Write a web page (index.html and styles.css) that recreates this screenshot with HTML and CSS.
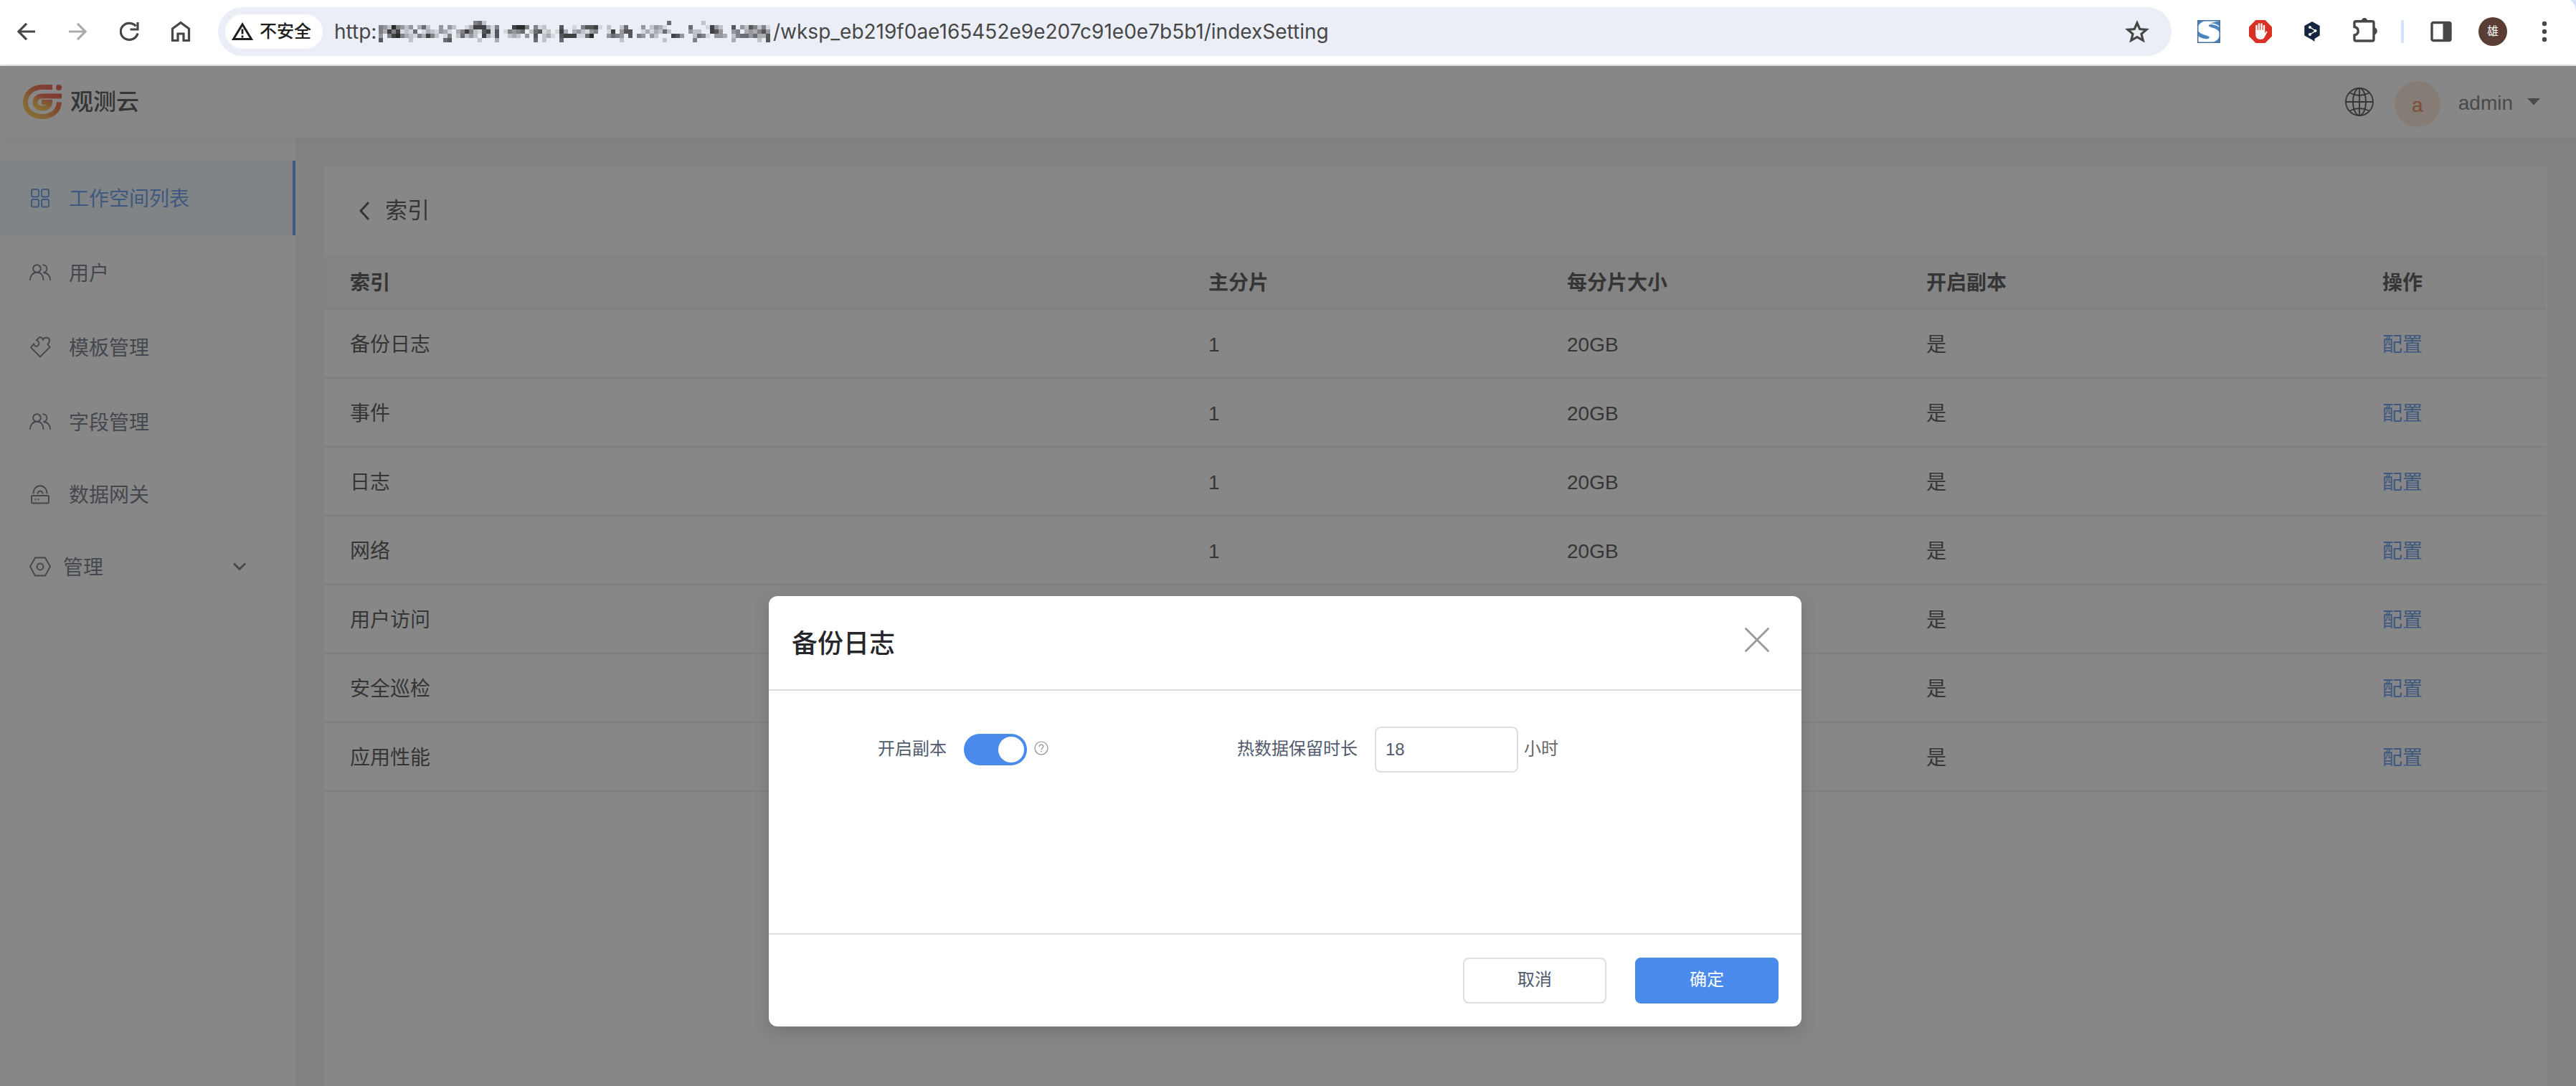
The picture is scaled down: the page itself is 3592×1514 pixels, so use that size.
FILE: index.html
```html
<!DOCTYPE html>
<html lang="zh-CN">
<head>
<meta charset="utf-8">
<title>观测云</title>
<link rel="stylesheet" href="styles.css">
</head>
<body>
<div class="browser">
  <svg class="nav-icon back" width="26" height="26" viewBox="0 0 26 26"><path d="M25 13H3M13 1.800L2 13l11 11.200"/></svg>
  <svg class="nav-icon forward" width="26" height="26" viewBox="0 0 26 26"><path d="M0 13h23M12 1.800L23 13 12 24.200"/></svg>
  <svg class="nav-icon reload" width="28" height="28" viewBox="0 0 28 28"><path d="M25 16.500A12 11.500 0 1 1 22.500 6.500M25 1v10H14.500"/></svg>
  <svg class="nav-icon home" width="28" height="30" viewBox="0 0 28 30"><path d="M2.500 27.500V11L14 2.500 25.500 11v16.500H18V18h-8v9.500z"/></svg>
  <div class="address">
    <div class="chip">
      <svg width="30" height="26" viewBox="0 0 30 26"><path d="M15 3L2.500 23.500h25z" fill="none" stroke="#1f1f1f" stroke-width="3"/><path d="M15 9.500v7M15 18.500v3" stroke="#1f1f1f" stroke-width="2.800"/></svg>
      <span>不安全</span>
    </div>
    <span class="url url-scheme">http:</span>
    <svg class="mosaic" id="mosaic" width="550" height="30" viewBox="0 0 550 30" shape-rendering="crispEdges"></svg>
    <span class="url url-path">/wksp_eb219f0ae165452e9e207c91e0e7b5b1/indexSetting</span>
    <svg class="star" width="34" height="32" viewBox="0 0 34 32"><path d="M17 4l3.700 8.500 9.300.8-7 6 2.200 9-8.200-4.800-8.200 4.800 2.200-9-7-6 9.300-.8z" fill="none" stroke="#474747" stroke-width="3.200"/></svg>
  </div>
  <svg class="ext ext-s" width="32" height="32" viewBox="0 0 32 32"><path d="M0 0h32v32H0z" fill="#fff"/><path d="M31 5v13c-1.500-4-5-6-10.500-7.500-4-1.200-5.500-2.300-4.500-3.500C18 5 25 6.500 31 10zM1 1h9C5 3 2 6 1 9zM1 15c2 3 5 4.500 10 6 4.500 1.300 6.500 2.300 5.500 4C15 27.500 7 26.500 1 22zM31 22v9h-9c5-2 8-5 9-9zM14 5.500C20 3.500 27 5 31 9V1" fill="#4d86bf"/><path d="M.75.75h30.500v30.500H.750z" fill="none" stroke="#43709f" stroke-width="1.500"/></svg>
  <svg class="ext ext-hand" width="32" height="32" viewBox="0 0 32 32"><path d="M9.400 0h13.200L32 9.400v13.200L22.600 32H9.400L0 22.600V9.400z" fill="#d93025"/><path d="M10.500 17V8M14 15V5.500M17.500 15V5.500M21 18V8" stroke="#fff" stroke-width="2.400" stroke-linecap="round"/><path d="M9.300 14h12.900v5l1.300-2.500c1-1.500 2.500-1 1.700.7L21.500 24c-1 2-2.500 3-5.500 3-4.500 0-6.700-3-6.700-7z" fill="#fff"/></svg>
  <svg class="ext ext-hex" width="24" height="30" viewBox="0 0 24 30"><path d="M12 1l10.700 6v13.500L15.500 25v4L12 26.500 1.300 20.500V7z" fill="#15253f"/><path d="M9 9l8 5-8 5" fill="none" stroke="#fff" stroke-width="1.400"/><circle cx="9" cy="9" r="2" fill="#fff"/><circle cx="16.500" cy="14" r="2" fill="#fff"/><circle cx="9" cy="19" r="2" fill="#fff"/></svg>
  <svg class="ext ext-puzzle" width="36" height="36" viewBox="0 0 36 36"><path d="M5 5.800h23q2 0 2 2V31q0 2-2 2H5q-2 0-2-2v-6c7-1.500 7-10 0-11.500v-5.700q0-2 2-2z" fill="none" stroke="#474747" stroke-width="3.400"/><path d="M12.500 6a4.500 5 0 0 1 9 0zM30 14a4.800 5.200 0 0 1 0 10.400z" fill="#474747"/></svg>
  <span class="divider"></span>
  <svg class="ext ext-panel" width="30" height="30" viewBox="0 0 30 30"><rect x="2" y="2.500" width="26" height="25" rx="2" fill="none" stroke="#474747" stroke-width="3.400"/><path d="M17.500 2H28v26H17.500z" fill="#474747"/></svg>
  <span class="profile">雄</span>
  <svg class="ext ext-dots" width="8" height="30" viewBox="0 0 8 30"><circle cx="4" cy="4" r="3.200"/><circle cx="4" cy="15" r="3.200"/><circle cx="4" cy="26" r="3.200"/></svg>
  <svg class="corner" width="8" height="16" viewBox="0 0 8 16"><path d="M0 0h8v16Q7 5 0 0z" fill="#d3e3fd"/></svg>
</div>

<div class="app">
  <header class="topbar">
    <svg class="logo" width="54" height="48" viewBox="0 0 54 48">
      <defs><linearGradient id="brand" x1="0" y1="1" x2="1" y2="0"><stop offset="0" stop-color="#ffc629"/><stop offset=".3" stop-color="#f5a634"/><stop offset=".65" stop-color="#f0552e"/><stop offset="1" stop-color="#ee3c2c"/></linearGradient></defs>
      <g fill="none" stroke="url(#brand)" stroke-width="7"><path d="M41 3.500H27.500C13 3.500 3.500 12.500 3.500 24.500S13 44.500 27 44.500 50 36 50.500 24.500"/><path d="M54 16H28c-7 0-11 3.500-11 8.500S21 33 27 33s10.500-3 10.500-8.500H26"/></g>
      <circle cx="50" cy="4" r="4" fill="#ee3c2c"/>
    </svg>
    <span class="brand">观测云</span>
    <svg class="globe" width="42" height="42" viewBox="0 0 42 42" fill="none" stroke="#333" stroke-width="1.800"><circle cx="21" cy="21" r="19"/><ellipse cx="21" cy="21" rx="9" ry="19"/><path d="M21 2v38M2 21h38M7.500 8.500Q21 15.500 34.500 8.500M7.500 33.500Q21 26.500 34.500 33.500"/></svg>
    <span class="avatar">a</span>
    <span class="user">admin</span>
    <svg class="caret" width="18" height="10" viewBox="0 0 18 10"><path d="M0 0h18L9 9.500z" fill="#666"/></svg>
  </header>
  <div class="body">
    <nav class="sidebar">
      <a class="item active"><svg width="30" height="30" viewBox="0 0 30 30"><rect x="3" y="3" width="10" height="10.500" rx="2.500"/><rect x="17" y="3" width="10" height="10.500" rx="2.500"/><rect x="3" y="17" width="10" height="10.500" rx="2.500"/><rect x="17" y="17" width="10" height="10.500" rx="2.500"/></svg><span>工作空间列表</span></a>
      <a class="item"><svg width="30" height="30" viewBox="0 0 30 30"><circle cx="10.500" cy="9.500" r="5.300"/><path d="M1 26c0-7 4-11.200 9.500-11.200S19.500 19 19.500 26M18.500 4.300c7-.5 8.500 9.500 1 10.700M19.500 15c6 .5 9.500 4.500 9.500 11"/></svg><span>用户</span></a>
      <a class="item"><svg width="30" height="30" viewBox="0 0 30 30"><path d="M15 28.500L2 15.500 6 10.500c1.500 5.500 9 3.500 7-2.500-.8-2-2.500-2-3-2.700L13.500 1.500c3-.8 5 .5 5.300 4 1-5 9.200-5 9.200.5 0 3-1.500 4-2.500 5l3 4z"/></svg><span>模板管理</span></a>
      <a class="item"><svg width="30" height="30" viewBox="0 0 30 30"><circle cx="10.500" cy="9.500" r="5.300"/><path d="M1 26c0-7 4-11.200 9.500-11.200S19.500 19 19.500 26M18.500 4.300c7-.5 8.500 9.500 1 10.700M19.500 15c6 .5 9.500 4.500 9.500 11"/></svg><span>字段管理</span></a>
      <a class="item short"><svg width="30" height="30" viewBox="0 0 30 30"><rect x="3" y="17" width="24" height="10.500" rx="1.500"/><path d="M5.500 14.500c0-15 19-15 19 0M11.500 14.500c0-5 7-5 7 0M7.500 22.200h2M11.500 22.200h2"/></svg><span>数据网关</span></a>
      <a class="item group"><svg width="30" height="30" viewBox="0 0 30 30"><path d="M8 2.500h14L29 15l-7 12.500H8L1 15z"/><circle cx="15" cy="15" r="4.500"/></svg><span>管理</span><svg class="chev" width="18" height="12" viewBox="0 0 18 12"><path d="M1 1.500l8 8 8-8"/></svg></a>
    </nav>
    <main class="content">
      <section class="panel">
        <h1 class="panel-title"><svg width="16" height="28" viewBox="0 0 16 28"><path d="M14 2L3 14l11 12"/></svg><span>索引</span></h1>
        <div class="table">
          <div class="row head"><span>索引</span><span>主分片</span><span>每分片大小</span><span>开启副本</span><span>操作</span></div>
          <div class="row"><span>备份日志</span><span>1</span><span>20GB</span><span>是</span><a>配置</a></div>
          <div class="row"><span>事件</span><span>1</span><span>20GB</span><span>是</span><a>配置</a></div>
          <div class="row"><span>日志</span><span>1</span><span>20GB</span><span>是</span><a>配置</a></div>
          <div class="row"><span>网络</span><span>1</span><span>20GB</span><span>是</span><a>配置</a></div>
          <div class="row"><span>用户访问</span><span></span><span></span><span>是</span><a>配置</a></div>
          <div class="row"><span>安全巡检</span><span></span><span></span><span>是</span><a>配置</a></div>
          <div class="row"><span>应用性能</span><span></span><span></span><span>是</span><a>配置</a></div>
        </div>
      </section>
    </main>
  </div>
  <div class="mask">
    <div class="modal">
      <div class="modal-head"><h2>备份日志</h2><svg width="34" height="34" viewBox="0 0 34 34"><path d="M1.500 1.500l31 31M32.500 1.500l-31 31" stroke="#999" stroke-width="2.800" stroke-linecap="round"/></svg></div>
      <div class="modal-body">
        <label class="label">开启副本</label>
        <span class="switch"><i></i></span>
        <svg class="help" width="20" height="20" viewBox="0 0 20 20" fill="none" stroke="#888" stroke-width="1.200"><circle cx="10" cy="10" r="9"/><path d="M7.200 8c0-3.800 5.600-3.800 5.600-.4 0 2.200-2.800 2.400-2.800 4.600M10 13.800v1.500"/></svg>
        <label class="label second">热数据保留时长</label>
        <span class="input">18</span>
        <span class="unit">小时</span>
      </div>
      <div class="modal-foot"><button class="btn">取消</button><button class="btn primary">确定</button></div>
    </div>
  </div>
</div>
<script src="mosaic.js"></script>
</body>
</html>
```
FILE: mosaic.js
```
// Redacted part of the address: one digit per 6px cell, 0 = clear, 9 = darkest
var rows = [
  "0000000000000000000000562000000000000000000000000000000000000000000600000002000000000000000",
  "5429542403620040420013888315000899505120007001057781020026000402431000006000184200704275251",
  "5385812160132143103585217817015456026712018303421450018047700131326200004220087400450343574",
  "4058953215385201502624208317002320407023107888116900046540705404200087400265104430256646337",
  "7000000200000006700000020003000000006020006000000000000020000000002000000500000000300000207"
];
var svg = document.getElementById("mosaic");
rows.forEach(function (row, y) {
  row.split("").forEach(function (d, x) {
    if (d === "0") return;
    var r = document.createElementNS("http://www.w3.org/2000/svg", "rect");
    r.setAttribute("x", x * 6);
    r.setAttribute("y", y * 6);
    r.setAttribute("width", 6);
    r.setAttribute("height", 6);
    r.setAttribute("fill", "rgba(32,32,32," + d / 9.5 + ")");
    svg.appendChild(r);
  });
});
```
FILE: styles.css
```css
* { box-sizing: border-box; }
body {
  margin: 0;
  width: 3592px;
  height: 1514px;
  overflow: hidden;
  font-family: "Liberation Sans", "Noto Sans CJK SC", sans-serif;
  font-size: 28px;
  line-height: 40px;
  color: #333;
}
svg { flex: none; display: block; }

/* browser toolbar */
.browser {
  position: relative;
  display: flex;
  align-items: center;
  height: 92px;
  padding-bottom: 2px;
  border-bottom: 2px solid #e0e0e0;
  background: #fff;
}
.nav-icon { fill: none; stroke: #474747; stroke-width: 3.2; }
.back { margin-left: 24px; }
.forward { margin-left: 46px; stroke: #ababab; }
.reload { margin-left: 45px; }
.home { margin-left: 43px; }
.address {
  display: flex;
  align-items: center;
  width: 2724px;
  height: 68px;
  margin-left: 38px;
  border-radius: 34px;
  background: #ebeef6;
}
.chip {
  display: flex;
  align-items: center;
  gap: 9px;
  width: 136px;
  height: 48px;
  margin-left: 10px;
  padding-left: 9px;
  border-radius: 24px;
  background: #fff;
  color: #1f1f1f;
  font-size: 24px;
  font-weight: 500;
  white-space: nowrap;
}
.url { font-family: "Inter", sans-serif; font-size: 28px; color: #474747; white-space: nowrap; }
.url-scheme { width: 62px; margin-left: 16px; }
.mosaic { width: 550px; }
.url-path { width: 778px; }
.star { margin-left: 1107px; }
.ext-s { margin-left: 36px; }
.ext-hand { margin-left: 40px; }
.ext-hex { margin-left: 44px; }
.ext-puzzle { margin-left: 44px; margin-top: -4px; }
.divider { width: 4px; height: 32px; margin-left: 32px; border-radius: 2px; background: #d3e3fd; }
.ext-panel { margin-left: 37px; }
.profile {
  width: 40px;
  height: 40px;
  margin-left: 37px;
  border-radius: 50%;
  background: #5a3e36;
  color: #fff;
  font-size: 16px;
  text-align: center;
}
.ext-dots { margin-left: 48px; fill: #474747; }
.corner { position: absolute; top: 0; right: 0; }

/* application */
.app { position: relative; display: flex; flex-direction: column; height: 1422px; background: #f0f3f8; }
.topbar {
  position: relative;
  display: flex;
  align-items: center;
  height: 100px;
  padding: 0 50px 0 32px;
  background: #fff;
  box-shadow: 0 2px 12px rgba(0, 21, 41, .05);
}
.brand { margin-left: 12px; font-size: 32px; font-weight: 500; line-height: 44px; }
.globe { margin-left: auto; }
.avatar {
  width: 64px;
  height: 64px;
  margin: 6px 0 0 28px;
  border-radius: 50%;
  background: #fbe3d3;
  color: #e8722c;
  text-align: center;
  line-height: 68px;
}
.user { margin: 3px 0 0 25px; color: #666; }
.caret { margin-left: 20px; }
.body { display: flex; flex: 1; }
.sidebar { width: 412px; padding-top: 32px; background: #fff; }
.item {
  display: flex;
  align-items: center;
  height: 104px;
  padding-left: 41px;
  color: #5a6072;
}
.item svg { fill: none; stroke: currentColor; stroke-width: 1.900; }
.item span { margin-left: 25px; padding-top: 3px; }
.item.active { border-right: 4px solid #4a8aea; background: #eff8ff; color: #4a8aea; }
.item.short { height: 98px; }
.item.group span { margin-left: 17px; }
.item .chev { margin-left: 181px; stroke-width: 2.8; }
.content { display: flex; flex: 1; padding: 40px 40px 0; }
.panel { flex: 1; background: #fff; }
.panel-title {
  display: flex;
  align-items: center;
  gap: 21px;
  height: 124px;
  margin: 0;
  padding: 0 0 0 48px;
  font-size: 31px;
  font-weight: 400;
}
.panel-title svg { fill: none; stroke: #333; stroke-width: 3; }
.table { margin-right: 2px; }
.row {
  display: grid;
  grid-template-columns: 1197px 500px 501px 636px 1fr;
  align-items: center;
  height: 96px;
  padding: 3px 0 0 36px;
  border-bottom: 2px solid #ebedf0;
}
.row a { color: #4a8aea; }
.row.head { height: 76px; background: #f8f8f9; font-weight: 600; }

/* dialog */
.mask {
  position: absolute;
  inset: 0;
  background: rgba(55, 55, 55, .6);
}
.modal {
  width: 1440px;
  height: 600px;
  margin: 739px 0 0 1072px;
  border-radius: 12px;
  background: #fff;
  box-shadow: 0 8px 24px rgba(0, 0, 0, .15);
}
.modal-head {
  display: flex;
  align-items: center;
  justify-content: space-between;
  height: 132px;
  padding: 0 45px 8px 32px;
  border-bottom: 2px solid #dcdedc;
}
.modal-head h2 { margin: 12px 0 0; font-size: 36px; font-weight: 500; color: #26262b; }
.modal-body {
  display: flex;
  align-items: center;
  height: 338px;
  padding: 0 0 174px 152px;
  font-size: 24px;
}
.label { width: 96px; margin-top: -3px; color: #515a6e; }
.switch {
  display: flex;
  justify-content: flex-end;
  width: 88px;
  height: 44px;
  margin-left: 24px;
  padding: 4px;
  border-radius: 22px;
  background: #4a8aea;
}
.switch i { width: 36px; height: 36px; border-radius: 50%; background: #fff; }
.help { margin: -4px 0 0 10px; }
.label.second { width: 168px; margin-left: 263px; }
.input {
  width: 200px;
  height: 64px;
  margin-left: 24px;
  padding-left: 13px;
  border: 2px solid #dcdee2;
  border-radius: 8px;
  color: #515a6e;
  line-height: 60px;
}
.unit { margin: -3px 0 0 8px; color: #666; }
.modal-foot {
  display: flex;
  justify-content: flex-end;
  gap: 40px;
  height: 130px;
  padding: 32px 32px 0 0;
  border-top: 2px solid #dcdee0;
}
.btn {
  width: 200px;
  height: 64px;
  padding: 0 0 2px;
  border: 2px solid #dcdee2;
  border-radius: 8px;
  background: #fff;
  color: #515a6e;
  font: 24px/36px "Liberation Sans", "Noto Sans CJK SC", sans-serif;
}
.btn.primary { border-color: #4a8aea; background: #4a8aea; color: #fff; }
```
